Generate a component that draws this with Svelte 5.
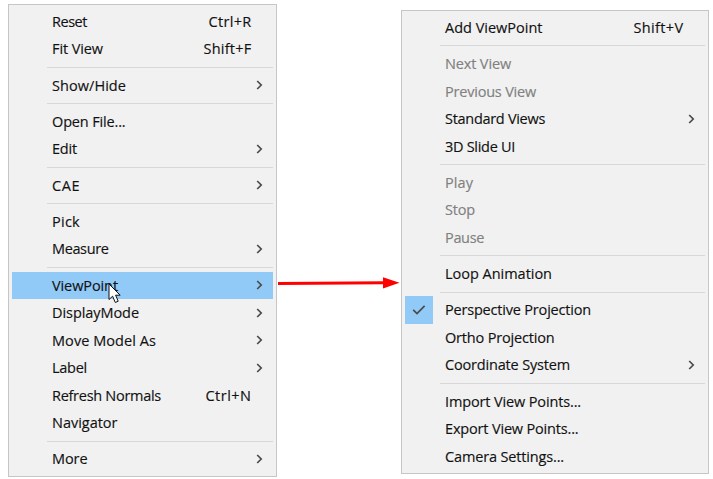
<script>
  const mainMenu = [
    [{ label: 'Reset', w: 35, key: 'Ctrl+R', kw: 43 }, { label: 'Fit View', w: 51, key: 'Shift+F', kw: 48 }],
    [{ label: 'Show/Hide', w: 74, sub: true }],
    [{ label: 'Open File...', w: 73.5 }, { label: 'Edit', w: 25, sub: true }],
    [{ label: 'CAE', w: 28, sub: true }],
    [{ label: 'Pick', w: 28 }, { label: 'Measure', w: 56.5, sub: true }],
    [
      { label: 'ViewPoint', w: 66, sub: true, active: true },
      { label: 'DisplayMode', w: 87, sub: true },
      { label: 'Move Model As', w: 104, sub: true },
      { label: 'Label', w: 35, sub: true },
      { label: 'Refresh Normals', w: 109, key: 'Ctrl+N', kw: 46 },
      { label: 'Navigator', w: 65.5 },
    ],
    [{ label: 'More', w: 35.5, sub: true }],
  ];
  const viewMenu = [
    [{ label: 'Add ViewPoint', w: 97.5, key: 'Shift+V', kw: 50 }],
    [
      { label: 'Next View', w: 66, disabled: true },
      { label: 'Previous View', w: 91, disabled: true },
      { label: 'Standard Views', w: 100, sub: true },
      { label: '3D Slide UI', w: 70 },
    ],
    [
      { label: 'Play', w: 28, disabled: true },
      { label: 'Stop', w: 30, disabled: true },
      { label: 'Pause', w: 39, disabled: true },
    ],
    [{ label: 'Loop Animation', w: 107 }],
    [
      { label: 'Perspective Projection', w: 146, checked: true },
      { label: 'Ortho Projection', w: 109.5 },
      { label: 'Coordinate System', w: 125, sub: true },
    ],
    [
      { label: 'Import View Points...', w: 136 },
      { label: 'Export View Points...', w: 133.5 },
      { label: 'Camera Settings...', w: 119 },
    ],
  ];

  // Squeezes a caption to its intended width by adjusting the tracking.
  function fit(node, width) {
    const natural = node.getBoundingClientRect().width;
    node.style.letterSpacing = `${(width - natural) / node.textContent.length}px`;
  }
</script>

{#snippet menu(groups)}
  {#each groups as group, g}
    {#if g > 0}<div class="separator"></div>{/if}
    {#each group as item}
      <div class="item" class:active={item.active} class:disabled={item.disabled}>
        <div class="gutter">
          {#if item.checked}
            <div class="check">
              <svg width="14" height="12" viewBox="0 0 14 12"><path d="M1.2 5.8 5 9.5 12.6 1.8" /></svg>
            </div>
          {/if}
        </div>
        <span class="label" use:fit={item.w}>{item.label}</span>
        {#if item.key}<span class="key" use:fit={item.kw}>{item.key}</span>{/if}
        {#if item.sub}
          <svg class="chevron" width="7" height="10" viewBox="0 0 7 10"><path d="M1.2 1 5.2 5 1.2 9" /></svg>
        {/if}
      </div>
    {/each}
  {/each}
{/snippet}

<main>
  <div class="menu first">{@render menu(mainMenu)}</div>
  <svg class="arrow" width="124" height="14" viewBox="0 0 124 14">
    <path d="M1 7.5 108 6.8" stroke="#f00" stroke-width="3" />
    <path d="M106 1.2 122.5 6.7 106 12.6Z" fill="#f00" />
  </svg>
  <div class="menu second">{@render menu(viewMenu)}</div>
  <svg class="pointer" width="14" height="21" viewBox="0 0 14 21">
    <path d="M1 1V16.5L4.6 13.2 7.3 19.5 10.2 18.2 7.6 12.2H12.2Z" />
  </svg>
</main>

<style>
  :global(body) { margin: 0; background: #fff; }
  main {
    position: relative;
    display: flex;
    align-items: flex-start;
    box-sizing: border-box;
    width: 713px;
    height: 479px;
    padding-left: 8px;
    background: #fff;
    font: 14.5px/27.5px "Open Sans", "Noto Sans", sans-serif;
    color: #111;
    -webkit-text-stroke: 0.15px currentColor;
    overflow: hidden;
  }
  .menu {
    box-sizing: border-box;
    flex: none;
    border: 1px solid #c6c6c6;
    background: #f1f1f1;
    padding: 2.9px 3px 0;
  }
  .first { width: 269px; height: 473px; margin-top: 4px; }
  .second { width: 308px; height: 464px; margin-top: 10px; }
  .arrow { flex: none; margin-top: 276px; }
  .item { display: flex; align-items: center; height: 27.5px; white-space: nowrap; }
  .active { background: #91c9f7; }
  .disabled { color: #808080; }
  .gutter { width: 40px; flex: none; }
  .check {
    display: flex;
    align-items: center;
    justify-content: center;
    width: 27.5px;
    height: 27.5px;
    background: #91c9f7;
  }
  .label { flex: none; }
  .key { margin-left: auto; margin-right: 21.5px; }
  .chevron { margin-left: auto; margin-right: 10.5px; }
  .chevron path, .check path { fill: none; stroke: #4a4a4a; stroke-width: 1.7; }
  .separator { height: 8.75px; margin-left: 35px; display: flex; align-items: center; }
  .separator::after { content: ""; flex: 1; height: 1px; background: #d7d7d7; }
  .pointer { position: absolute; left: 108px; top: 283px; }
  .pointer path { fill: #fff; stroke: #111; stroke-width: 1; }
</style>
